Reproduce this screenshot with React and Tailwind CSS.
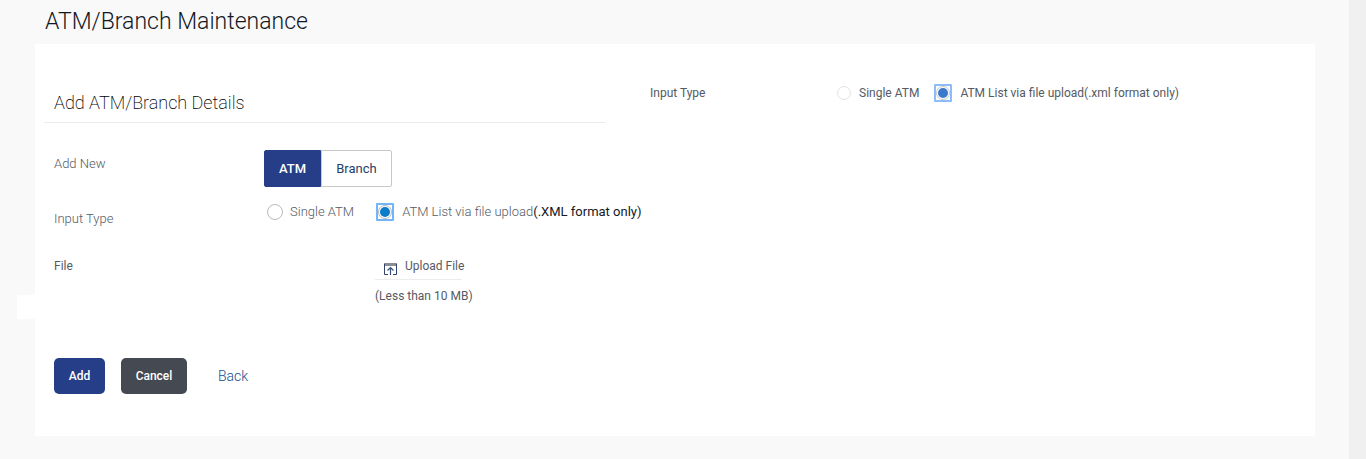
import React, { useState } from 'react';

// Round radio button; the selected one gets a square focus ring
function RadioOption({ name, value, selected, onSelect, ring, circle, label, children }) {
    const checked = selected === value;
    return (
        <label className={`flex items-center whitespace-nowrap ${label}`}>
            <span className={checked ? `flex size-[18px] shrink-0 items-center justify-center rounded-[1px] border-2 ${ring}` : 'flex shrink-0'}>
                <input
                    type="radio"
                    name={name}
                    value={value}
                    checked={checked}
                    onChange={() => onSelect(value)}
                    className={`appearance-none rounded-full border bg-clip-content p-px outline-none ${circle}`}
                />
            </span>
            <span>{children}</span>
        </label>
    );
}

function UploadIcon() {
    return (
        <svg width="13" height="12" viewBox="0 0 13 12" fill="none" aria-hidden="true">
            <path d="M0 1.5h13" stroke="#8a8d93" strokeWidth="3" />
            <path d="M4 11.5H.5V1M9 11.5h3.5V1" stroke="#34436b" />
            <path d="M6.5 12V5M3.5 7.5l3-3 3 3" stroke="#34527b" strokeWidth="1.2" />
        </svg>
    );
}

const leftCircle = 'size-4 border-[#b9b9b9] checked:size-[14px] checked:bg-[#0c7cc8]';
const rightCircle = 'size-[14px] border-[#e2e2e2] checked:border-[#c8c8c8] checked:bg-[#3c78cc]';

export default function App() {
    const [kind, setKind] = useState('atm');
    const [inputType, setInputType] = useState('list');
    const [sideType, setSideType] = useState('list');

    const tab = 'h-[37px] border text-[13px]';
    const active = 'border-[#253e87] bg-[#253e87] font-medium text-white';
    const idle = 'border-[#c8c8c8] bg-white text-[#253e6b]';

    return (
        <div className="flex min-h-screen bg-[#f9f9f9] font-['Roboto',sans-serif] text-[#555a63]">
            <main className="flex-1 pr-[34px] pb-[23px] pl-[35px]">
                <h1 className="flex h-11 items-center px-[10px] text-[23px] font-light text-[#14181f]">ATM/Branch Maintenance</h1>

                <div className="relative flex min-h-[392px] bg-white px-[9px] pt-10">
                    <div className="absolute top-[251px] -left-[18px] h-6 w-[18px] bg-white" />

                    <form className="w-[606px] shrink-0" onSubmit={(e) => e.preventDefault()}>
                        <h2 className="mr-[45px] flex h-[39px] items-center border-b border-[#ebebeb] px-[10px] text-lg font-extralight text-black">Add ATM/Branch Details</h2>

                        <div className="mt-[27px] flex pl-[10px]">
                            <span className="w-[210px] pt-1 text-[13px] leading-5 font-light">Add New</span>
                            <div className="flex">
                                <button type="button" onClick={() => setKind('atm')} className={`w-[57px] rounded-l-[2px] ${tab} ${kind === 'atm' ? active : idle}`}>ATM</button>
                                <button type="button" onClick={() => setKind('branch')} className={`w-[71px] rounded-r-[2px] ${tab} ${kind === 'branch' ? active : idle}`}>Branch</button>
                            </div>
                        </div>

                        <div className="mt-[14px] flex pl-[10px]">
                            <span className="w-[213px] pt-2 text-[13px] leading-5 font-light">Input Type</span>
                            <div className="flex h-[22px] items-center gap-[22px] text-[13px] font-light">
                                <RadioOption name="inputType" value="single" selected={inputType} onSelect={setInputType} ring="border-[#73b5f5]" circle={leftCircle} label="gap-[7px]">Single ATM</RadioOption>
                                <RadioOption name="inputType" value="list" selected={inputType} onSelect={setInputType} ring="border-[#73b5f5]" circle={leftCircle} label="gap-2">
                                    ATM List via file upload<span className="font-normal text-[#14181f]">(.XML format only)</span>
                                </RadioOption>
                            </div>
                        </div>

                        <div className="mt-[27px] flex pl-[10px] text-xs">
                            <span className="w-[321px] leading-5">File</span>
                            <div>
                                <button type="button" className="flex h-6 w-[87px] gap-2 border-b border-[#ececec] pl-[9px] text-left leading-5 whitespace-nowrap">
                                    <span className="pt-[7px]"><UploadIcon /></span>
                                    Upload File
                                </button>
                                <p className="pt-[6px] leading-5">(Less than 10 MB)</p>
                            </div>
                        </div>

                        <div className="mt-[52px] flex items-center pl-[10px]">
                            <button type="submit" className="h-9 w-[51px] rounded-[5px] bg-[#253e87] text-xs font-medium text-white">Add</button>
                            <button type="button" className="ml-4 h-9 w-[66px] rounded-[5px] bg-[#444952] text-xs font-medium text-white">Cancel</button>
                            <a href="#" className="ml-[31px] text-sm font-light text-[#1a4f8c]">Back</a>
                        </div>
                    </form>

                    <div className="flex h-[18px] flex-1 items-center text-xs whitespace-nowrap">
                        <span className="w-[187px]">Input Type</span>
                        <div className="flex items-center gap-[15px]">
                            <RadioOption name="sideType" value="single" selected={sideType} onSelect={setSideType} ring="border-[#8cbcfa]" circle={rightCircle} label="gap-2">Single ATM</RadioOption>
                            <RadioOption name="sideType" value="list" selected={sideType} onSelect={setSideType} ring="border-[#8cbcfa]" circle={rightCircle} label="gap-2">ATM List via file upload(.xml format only)</RadioOption>
                        </div>
                    </div>
                </div>
            </main>
            <div className="w-[17px] shrink-0 bg-[#f0f0f0]" />
        </div>
    );
}
